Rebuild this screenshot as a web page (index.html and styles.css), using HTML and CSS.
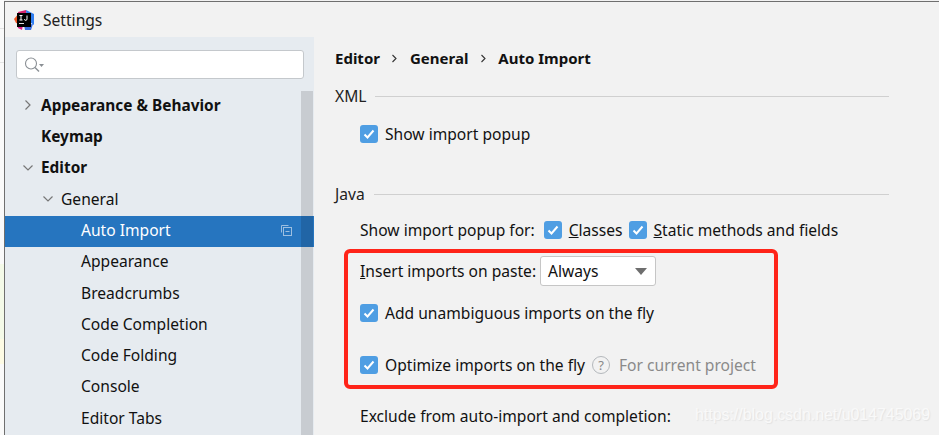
FILE: index.html
```html
<!DOCTYPE html>
<html lang="en">
<head>
<meta charset="utf-8">
<title>Settings</title>
<link rel="stylesheet" href="styles.css">
</head>
<body>
<div class="backdrop">
  <div class="tint-green"></div>
  <div class="tint-yellow"></div>
</div>
<div class="window">
  <header class="titlebar">
    <svg class="logo" width="20" height="20" viewBox="0 0 20 20">
      <path d="M0 9 L5 3 L9 5 L6 14 L2 13 Z" fill="#f05a28"/>
      <path d="M4 2 L12 0 L13 6 L5 8 Z" fill="#d6246e"/>
      <path d="M12 0 L20 4 L20 15 L13 10 Z" fill="#2f7df0"/>
      <path d="M3 13 L9 15 L8 20 L4 18 Z" fill="#e0218a"/>
      <path d="M10 15 L19 14 L17 20 L11 20 Z" fill="#3b6fe0"/>
      <rect x="3" y="3" width="14" height="14" fill="#000"/>
      <rect x="5" y="13" width="5" height="1" fill="#ddd"/>
      <path d="M5.500 5.500h3M7 5.500v4.500M5.500 10h3M13 5.500v3.400a1.200 1.200 0 0 1-2.600.3" fill="none" stroke="#fff" stroke-width="1"/>
    </svg>
    <span class="title">Settings</span>
  </header>
  <div class="body">
    <aside class="sidebar">
      <div class="search">
        <svg width="22" height="18" viewBox="0 0 22 18">
          <circle cx="8" cy="7.500" r="5.500" fill="none" stroke="#8a8f94" stroke-width="1.100"/>
          <path d="M12 11.500l4 4" stroke="#8a8f94" stroke-width="1.400"/>
          <path d="M16 8h5l-2.500 3z" fill="#8a8f94"/>
        </svg>
      </div>
      <div class="tree-wrap">
        <ul class="tree">
          <li class="row lvl0 bold">
            <svg class="arrow" width="12" height="12" viewBox="0 0 12 12"><path d="M3.500 1.500l4.500 4.500-4.500 4.500" fill="none" stroke="#777" stroke-width="1.200"/></svg>
            <span>Appearance &amp; Behavior</span>
          </li>
          <li class="row lvl0 bold"><span class="arrow-gap"></span><span>Keymap</span></li>
          <li class="row lvl0 bold">
            <svg class="arrow" width="12" height="12" viewBox="0 0 12 12"><path d="M1.500 3.500l4.500 4.500 4.500-4.500" fill="none" stroke="#777" stroke-width="1.200"/></svg>
            <span>Editor</span>
          </li>
          <li class="row lvl1">
            <svg class="arrow" width="12" height="12" viewBox="0 0 12 12"><path d="M1.500 3.500l4.500 4.500 4.500-4.500" fill="none" stroke="#777" stroke-width="1.200"/></svg>
            <span>General</span>
          </li>
          <li class="row lvl2 selected">
            <span>Auto Import</span>
            <svg class="copy" width="12" height="12" viewBox="0 0 12 12"><path d="M8.500 1.500H1.500V8.500" fill="none" stroke="#9dbfe0"/><rect x="3.500" y="3.500" width="8" height="8" fill="none" stroke="#9dbfe0"/><path d="M5.500 7.500h4" stroke="#9dbfe0"/></svg>
          </li>
          <li class="row lvl2"><span>Appearance</span></li>
          <li class="row lvl2"><span>Breadcrumbs</span></li>
          <li class="row lvl2"><span>Code Completion</span></li>
          <li class="row lvl2"><span>Code Folding</span></li>
          <li class="row lvl2"><span>Console</span></li>
          <li class="row lvl2"><span>Editor Tabs</span></li>
        </ul>
        <div class="scrollbar"></div>
      </div>
    </aside>
    <main class="content">
      <nav class="crumbs">
        <span>Editor</span>
        <svg width="7" height="9" viewBox="0 0 7 9"><path d="M1.500 1l3.500 3.500-3.500 3.500" fill="none" stroke="#333" stroke-width="1.100"/></svg>
        <span>General</span>
        <svg width="7" height="9" viewBox="0 0 7 9"><path d="M1.500 1l3.500 3.500-3.500 3.500" fill="none" stroke="#333" stroke-width="1.100"/></svg>
        <span>Auto Import</span>
      </nav>

      <div class="group-title xml"><span>XML</span><i class="rule"></i></div>
      <div class="opt opt-xml">
        <span class="check"><svg width="18" height="18" viewBox="0 0 18 18"><path d="M4.500 9.500l3 3 6-7" fill="none" stroke="#fff" stroke-width="2"/></svg></span>
        <span>Show import popup</span>
      </div>

      <div class="group-title java"><span>Java</span><i class="rule"></i></div>
      <div class="opt opt-popup">
        <span class="popup-label">Show import popup for:</span>
        <span class="check"><svg width="18" height="18" viewBox="0 0 18 18"><path d="M4.500 9.500l3 3 6-7" fill="none" stroke="#fff" stroke-width="2"/></svg></span>
        <span class="classes"><u>C</u>lasses</span>
        <span class="check"><svg width="18" height="18" viewBox="0 0 18 18"><path d="M4.500 9.500l3 3 6-7" fill="none" stroke="#fff" stroke-width="2"/></svg></span>
        <span><u>S</u>tatic methods and fields</span>
      </div>
      <div class="opt opt-paste">
        <span class="paste-label"><u>I</u>nsert imports on paste:</span>
        <span class="combo"><span>Always</span><svg width="12" height="7" viewBox="0 0 12 7"><path d="M0 0h12l-6 7z" fill="#6e6e6e"/></svg></span>
      </div>
      <div class="opt opt-add">
        <span class="check"><svg width="18" height="18" viewBox="0 0 18 18"><path d="M4.500 9.500l3 3 6-7" fill="none" stroke="#fff" stroke-width="2"/></svg></span>
        <span>Add unambiguous imports on the fly</span>
      </div>
      <div class="opt opt-optimize">
        <span class="check"><svg width="18" height="18" viewBox="0 0 18 18"><path d="M4.500 9.500l3 3 6-7" fill="none" stroke="#fff" stroke-width="2"/></svg></span>
        <span>Optimize imports on the fly</span>
        <span class="help">?</span>
        <span class="muted">For current project</span>
      </div>
      <div class="opt opt-exclude"><span>Exclude from auto-import and completion:</span></div>
    </main>
  </div>
</div>
<div class="annotation"></div>
<div class="watermark">https://blog.csdn.net/u014745069</div>
</body>
</html>
```

FILE: styles.css
```css
* { box-sizing: border-box; }
html, body { margin: 0; height: 100%; }
body {
  width: 939px;
  height: 435px;
  overflow: hidden;
  position: relative;
  background: #f2f2f2;
  font-family: "Noto Sans", "Open Sans", sans-serif;
  font-size: 15.6px;
  color: #111;
  display: flex;
}
.backdrop {
  width: 4px;
  flex: none;
  position: relative;
  background: #fafafa;
  background-image: linear-gradient(#e4e4e4, #e4e4e4), linear-gradient(#e4e4e4, #e4e4e4);
  background-size: 100% 1px, 100% 1px;
  background-position: 0 28px, 0 62px;
  background-repeat: no-repeat;
}
.tint-green { position: absolute; left: 0; top: 264px; width: 4px; height: 75px; background: #f4fae8; }
.tint-yellow { position: absolute; left: 0; top: 339px; width: 4px; height: 25px; background: #fdfbe4; }
.window {
  flex: 1;
  display: flex;
  flex-direction: column;
  border-left: 1px solid #6f6f6f;
  border-top: 1px solid #6f6f6f;
  margin-top: 1px;
  min-width: 0;
  background: #f2f2f2;
}
.titlebar {
  height: 35px;
  flex: none;
  display: flex;
  align-items: center;
  padding-left: 9px;
}
.logo { flex: none; }
.title { margin-left: 9px; color: #222; }
.body { flex: 1; display: flex; min-height: 0; }

.sidebar {
  width: 309px;
  flex: none;
  background: #e6ebf0;
  padding-top: 13px;
  display: flex;
  flex-direction: column;
  min-height: 0;
}
.search {
  width: 288px;
  height: 29px;
  margin-left: 11px;
  flex: none;
  background: #fff;
  border: 1px solid #c4c8cc;
  border-radius: 3px;
  display: flex;
  align-items: center;
  padding-left: 6px;
}
.tree-wrap { flex: 1; position: relative; margin-top: 10px; padding-top: 2px; min-height: 0; overflow: hidden; }
.tree { list-style: none; margin: 0; padding: 0; }
.row {
  height: 31.250px;
  padding-bottom: 3px;
  display: flex;
  align-items: center;
  white-space: nowrap;
  color: #111;
}
.bold { font-weight: 700; font-size: 15.400px; }
.lvl0 { padding-left: 17px; }
.lvl1 { padding-left: 37px; }
.lvl2 { padding-left: 76px; }
.arrow { flex: none; margin-right: 7px; }
.arrow-gap { width: 19px; flex: none; }
.selected { background: #2675bf; color: #fff; position: relative; }
.copy { position: absolute; left: 275px; top: 8px; }
.scrollbar {
  position: absolute;
  left: 296px;
  top: 2px;
  width: 12px;
  bottom: 0;
  background: rgba(0, 0, 0, 0.13);
}

.content { flex: 1; padding-left: 22px; min-width: 0; position: relative; }
.crumbs {
  height: 20px;
  margin-top: 11px;
  margin-left: -1px;
  display: flex;
  align-items: center;
  font-weight: 700;
  font-size: 15px;
  gap: 11.500px;
}
.group-title {
  width: 554px;
  margin-left: -1px;
  display: flex;
  align-items: center;
  gap: 9px;
  height: 20px;
  color: #222;
}
.xml { margin-top: 18px; }
.java { margin-top: 40px; }
.rule { flex: 1; height: 1px; background: #d0d0d0; }
.opt {
  display: flex;
  align-items: center;
  margin-left: 24px;
  height: 20px;
  white-space: nowrap;
}
.check {
  width: 18px;
  height: 18px;
  flex: none;
  background: #4f9ee3;
  border-radius: 3px;
  margin-right: 7px;
  display: block;
}
.check svg { display: block; }
.opt-xml { margin-top: 18px; }
.opt-popup { margin-top: 16px; }
.popup-label { margin-right: 9px; }
.classes { margin-right: 6px; }
.opt-paste { margin-top: 21px; }
.paste-label { margin-right: 4px; }
.combo {
  width: 116px;
  height: 30px;
  background: #fff;
  border: 1px solid #c6c6c6;
  border-radius: 3px;
  display: flex;
  align-items: center;
  justify-content: space-between;
  padding: 0 8px 0 7px;
}
.opt-add { margin-top: 22px; }
.opt-optimize { margin-top: 32px; }
.help {
  width: 18px;
  height: 18px;
  flex: none;
  margin-left: 7px;
  border: 1.500px solid #b4b8bc;
  border-radius: 50%;
  font-size: 13px;
  color: #888;
  display: flex;
  align-items: center;
  justify-content: center;
}
.muted { color: #8a8a8a; margin-left: 9px; }
.opt-exclude { margin-top: 31px; }

.annotation {
  position: absolute;
  left: 344px;
  top: 249px;
  width: 434px;
  height: 140px;
  border: 4px solid #ff2419;
  border-radius: 6px;
}
.watermark {
  position: absolute;
  left: 695px;
  top: 406px;
  font-family: "Liberation Sans", Arial, sans-serif;
  font-size: 15.900px;
  color: #f9f9f9;
  text-shadow: 1px 1px 1px #e2e2e2;
  white-space: nowrap;
}
```
